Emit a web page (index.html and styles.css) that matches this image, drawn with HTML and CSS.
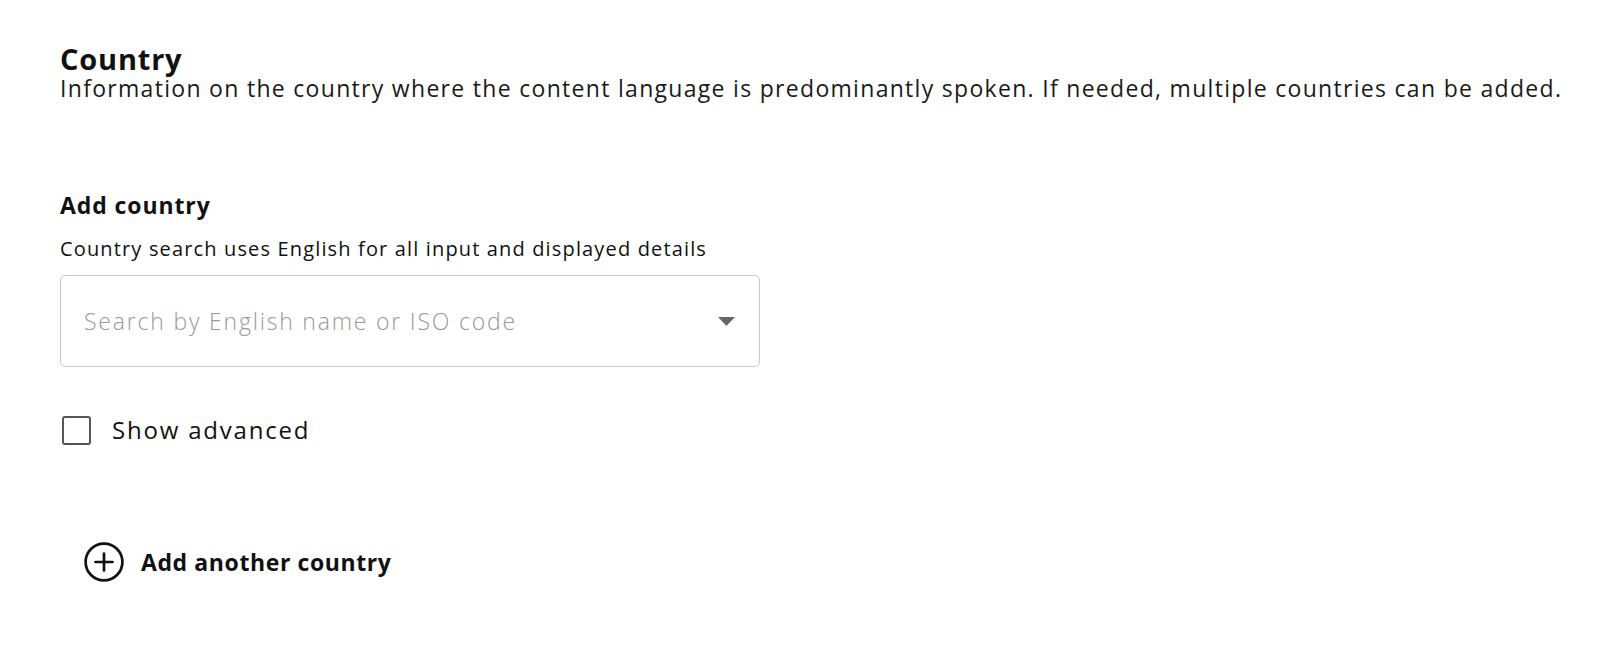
FILE: index.html
```html
<!DOCTYPE html>
<html lang="en">
<head>
<meta charset="utf-8">
<title>Country</title>
<link rel="stylesheet" href="styles.css">
</head>
<body>
<main class="page">
  <section class="section">
    <h2 class="title">Country</h2>
    <p class="desc">Information on the country where the content language is predominantly spoken. If needed, multiple countries can be added.</p>

    <div class="field">
      <label class="label">Add country</label>
      <p class="hint">Country search uses English for all input and displayed details</p>
      <div class="select">
        <span class="placeholder">Search by English name or ISO code</span>
        <svg class="caret" width="17" height="9" viewBox="0 0 17 9"><path d="M0 0H17L8.5 9Z" fill="#666"/></svg>
      </div>
    </div>

    <label class="check">
      <span class="box"></span>
      <span class="check-text">Show advanced</span>
    </label>

    <button class="add" type="button">
      <svg class="add-icon" width="40" height="40" viewBox="0 0 40 40"><circle cx="20" cy="20" r="18.4" fill="none" stroke="#111" stroke-width="2.7"/><path d="M20 11.5V28.5M11.5 20H28.5" stroke="#111" stroke-width="2.7" stroke-linecap="round"/></svg>
      <span class="add-text">Add another country</span>
    </button>
  </section>
</main>
</body>
</html>
```

FILE: styles.css
```css
* { box-sizing: border-box; }
html, body { margin: 0; padding: 0; background: #fff; }
body {
  font-family: "Open Sans", "Noto Sans", sans-serif;
  color: #111;
}
.page { padding: 44px 20px 0 60px; }
.section { display: flex; flex-direction: column; align-items: flex-start; }
.title {
  margin: 0;
  font-size: 29px;
  line-height: 30px;
  font-weight: 700;
  letter-spacing: 0.8px;
}
.desc {
  margin: 3px 0 0 0;
  font-size: 23px;
  line-height: 22px;
  color: #1a1a1a;
  letter-spacing: 1.3px;
  white-space: nowrap;
}
.field { margin-top: 91px; display: flex; flex-direction: column; }
.label {
  font-size: 23px;
  line-height: 30px;
  font-weight: 700;
  letter-spacing: 0.9px;
}
.hint {
  margin: 16px 0 0 0;
  font-size: 20px;
  line-height: 26px;
  letter-spacing: 1.15px;
}
.select {
  margin-top: 13px;
  width: 700px;
  height: 92px;
  border: 1px solid #c8c8c8;
  border-radius: 5px;
  display: flex;
  align-items: center;
  justify-content: space-between;
  padding: 0 24px 0 23px;
}
.placeholder {
  font-size: 23px;
  font-weight: 300;
  color: #999;
  letter-spacing: 1.8px;
}
.caret { display: block; }
.check {
  margin-top: 48px;
  height: 30px;
  display: flex;
  align-items: center;
  gap: 21px;
  cursor: pointer;
}
.box {
  width: 29px;
  height: 29px;
  border: 2.5px solid #555;
  border-radius: 3px;
  margin-left: 2px;
}
.check-text { font-size: 24px; line-height: 30px; letter-spacing: 1.8px; }
.add {
  margin-top: 97px;
  margin-left: 24px;
  display: flex;
  align-items: center;
  gap: 17px;
  border: 0;
  background: none;
  padding: 0;
  font-family: inherit;
  color: #111;
  cursor: pointer;
}
.add-icon { display: block; }
.add-text { font-size: 23px; line-height: 30px; font-weight: 700; letter-spacing: 0.6px; }
```
